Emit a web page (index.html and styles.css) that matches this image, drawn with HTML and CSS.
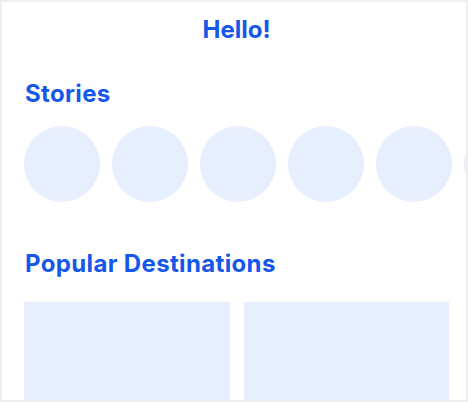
FILE: index.html
```html
<!DOCTYPE html>
<html lang="en">
<head>
<meta charset="utf-8">
<title>Hello</title>
<link rel="stylesheet" href="styles.css">
</head>
<body>
<div class="frame">
  <main class="screen">
    <div class="content">
      <h1 class="greeting">Hello!</h1>
      <h2 class="section-title stories-title">Stories</h2>
      <div class="stories">
        <div class="story"></div>
        <div class="story"></div>
        <div class="story"></div>
        <div class="story"></div>
        <div class="story"></div>
        <div class="story"></div>
      </div>
      <h2 class="section-title dest-title">Popular Destinations</h2>
      <div class="destinations">
        <div class="card"></div>
        <div class="card"></div>
      </div>
    </div>
  </main>
</div>
</body>
</html>
```
FILE: styles.css
```css
* { box-sizing: border-box; }
html, body { margin: 0; padding: 0; }
body {
  background: #efefef;
  font-family: Inter, "Noto Sans", "Liberation Sans", sans-serif;
}
.frame {
  padding: 2px;
  width: 468px;
  height: 402px;
}
.screen {
  background: #ffffff;
  width: 464px;
  height: 398px;
  overflow: hidden;
  padding: 13px 17px 0 22px;
}
.content {
  width: 425px;
}
.greeting {
  margin: 0;
  text-align: center;
  font-size: 24px;
  line-height: 29px;
  font-weight: 700;
  color: #1557e9;
}
.section-title {
  margin: 0;
  font-size: 24px;
  line-height: 29px;
  font-weight: 700;
  color: #1557e9;
  padding-left: 1px;
  letter-spacing: 0.35px;
}
.stories-title { margin-top: 35px; }
.stories {
  display: flex;
  gap: 12px;
  margin-top: 18px;
}
.story {
  flex: 0 0 76px;
  width: 76px;
  height: 76px;
  border-radius: 50%;
  background: #e7eefd;
}
.dest-title { margin-top: 47px; }
.destinations {
  display: grid;
  grid-template-columns: 1fr 1fr;
  gap: 14px;
  margin-top: 24px;
}
.card {
  height: 160px;
  background: #e7eefd;
}
```
